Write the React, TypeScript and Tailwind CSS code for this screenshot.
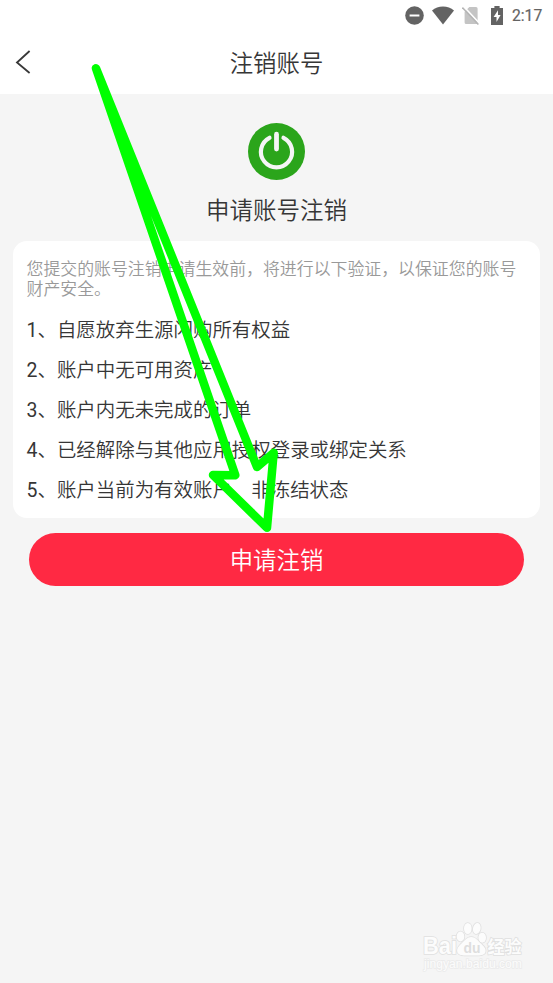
const rules = [
  "自愿放弃生源闪购所有权益",
  "账户中无可用资产",
  "账户内无未完成的订单",
  "已经解除与其他应用授权登录或绑定关系",
  "账户当前为有效账户、非冻结状态",
];

function StatusBar() {
  return (
    <div className="flex h-8 items-center justify-end pr-[11px] text-[#636363]">
      <svg className="mb-px mr-[8px] h-[19px] w-[19px]" viewBox="0 0 19 19">
        <circle cx="9.5" cy="9.5" r="9.3" fill="currentColor" />
        <rect x="4.6" y="8.5" width="9.8" height="2" fill="#fff" />
      </svg>
      <svg className="mb-px mr-[8px] h-[19px] w-[22px]" viewBox="0 0 22 19">
        <path d="M0 4.5C3 2 6.8.6 11 .6S19 2 22 4.5L11 18.5z" fill="currentColor" />
      </svg>
      <svg className="mb-px mr-[11px] h-[19px] w-[18px]" viewBox="0 0 18 19">
        <path d="M3.2 5.2 7.3 1H14q1.6 0 1.6 1.6V18H4.2q-1.6 0-1.6-1.6V5.8z" fill="#c4c4c4" />
        <path d="M1.4.2 17.8 17.6" stroke="#fff" strokeWidth="1.6" />
        <path d="M.4 1.6 16.4 18.4" stroke="#b5b5b5" strokeWidth="1.5" />
      </svg>
      <svg className="mb-px mr-[9px] h-[19px] w-[12px]" viewBox="0 0 12 19">
        <path d="M0 2h3.4V0h5.2v2H12v17H0z" fill="currentColor" />
        <path d="M7 4.2 2.6 11h2.9v5L9.6 9H7z" fill="#fff" />
      </svg>
      <span className="w-[30px] whitespace-nowrap font-[Roboto] text-[15.7px] font-normal leading-none [-webkit-text-stroke:0.2px_#636363]">
        2:17
      </span>
    </div>
  );
}

function Header() {
  return (
    <header className="relative flex h-[62px] items-center justify-center">
      <button className="absolute left-[15px] top-[18px]" aria-label="返回">
        <svg className="h-[24px] w-[17px]" viewBox="0 0 17 24" fill="none">
          <path d="M14.6 1 2 12.5 14.6 23" stroke="#383838" strokeWidth="1.8" />
        </svg>
      </button>
      <h1 className="pt-[4px] text-[23.4px] font-[350] leading-none">注销账号</h1>
    </header>
  );
}

function Arrow() {
  return (
    <svg
      className="pointer-events-none absolute left-0 top-0 h-[983px] w-[553px]"
      viewBox="0 0 553 983"
      fill="none"
    >
      <path
        d="M96 68.3 235.3 475.2 213 475 267 527.8 273.7 452.7 257 467z"
        stroke="#00ff00"
        strokeWidth="8.5"
        strokeLinejoin="round"
      />
    </svg>
  );
}

function Watermark() {
  return (
    <svg
      className="absolute bottom-[8px] right-[25px] h-[62px] w-[108px]"
      viewBox="0 0 108 62"
      fill="#fcfcfc"
      stroke="#e0e0e0"
      strokeWidth="1.6"
      paintOrder="stroke"
      fontFamily="'Liberation Sans', 'Noto Sans CJK SC', sans-serif"
      fontWeight="700"
    >
      <text x="3" y="41" fontSize="23" textLength="34" lengthAdjust="spacingAndGlyphs">
        Bai
      </text>
      <ellipse cx="40.5" cy="23.5" rx="3.8" ry="5" />
      <ellipse cx="47.8" cy="15.5" rx="3.8" ry="5.5" />
      <ellipse cx="56.8" cy="15.5" rx="3.8" ry="5.5" transform="rotate(12 56.8 15.5)" />
      <ellipse cx="62.2" cy="24.8" rx="3.8" ry="5" />
      <path d="M51.3 24c4 0 6 3 9 6s6.500 5.500 5 9.500c-1.500 3.600-8 3-14 3s-12 .6-13.800-3c-1.500-4 1.800-6.800 4.500-9.500s5.300-6 9.300-6z" />
      <text
        x="43.5"
        y="39.5"
        fontSize="15"
        fill="#dedede"
        stroke="none"
        textLength="17"
        lengthAdjust="spacingAndGlyphs"
      >
        du
      </text>
      <text x="67.5" y="40" fontSize="17.5" textLength="34" lengthAdjust="spacingAndGlyphs">
        经验
      </text>
      <text
        x="4"
        y="54.5"
        fontSize="12"
        stroke="#ebebeb"
        fontWeight="400"
        textLength="98"
        lengthAdjust="spacingAndGlyphs"
      >
        jingyan.baidu.com
      </text>
    </svg>
  );
}

export default function App() {
  return (
    <div className="relative h-[983px] w-[553px] overflow-hidden bg-[#f5f5f5] font-[Roboto,'Noto_Sans_CJK_SC',sans-serif] text-[#363636] [font-weight:350]">
      <div className="bg-white">
        <StatusBar />
        <Header />
      </div>

      <main className="flex flex-col px-[13px] pt-[29px]">
        <svg className="h-[57px] w-[57px] self-center" viewBox="0 0 57 57" fill="none">
          <circle cx="28.5" cy="28.5" r="28.5" fill="#2ba51b" />
          <path
            d="M21.5 14.8a15.6 15.6 0 1 0 14 0"
            stroke="#f5f5f5"
            strokeWidth="4.2"
            strokeLinecap="round"
          />
          <path d="M28.5 11.2V26" stroke="#f5f5f5" strokeWidth="4.8" strokeLinecap="round" />
        </svg>
        <h2 className="mt-[18px] text-center text-[23.5px] font-[350] leading-[26px]">
          申请账号注销
        </h2>

        <section className="mt-[17px] h-[277px] rounded-[14px] bg-white px-[13.5px] pt-[18px]">
          <p className="whitespace-nowrap text-[16.9px] leading-5 text-[#999]">
            您提交的账号注销申请生效前，将进行以下验证，以保证您的账号
            <br />
            财产安全。
          </p>
          <ul className="mt-[12px] text-[19.45px] leading-10">
            {rules.map((rule, i) => (
              <li key={rule}>
                <span className="font-normal">{i + 1}</span>、{rule}
              </li>
            ))}
          </ul>
        </section>

        <button className="mx-4 mt-[15px] h-[53px] rounded-full bg-[#ff2943] pt-[5px] text-[23.4px] leading-none text-white">
          申请注销
        </button>
      </main>

      <Arrow />
      <Watermark />
    </div>
  );
}
